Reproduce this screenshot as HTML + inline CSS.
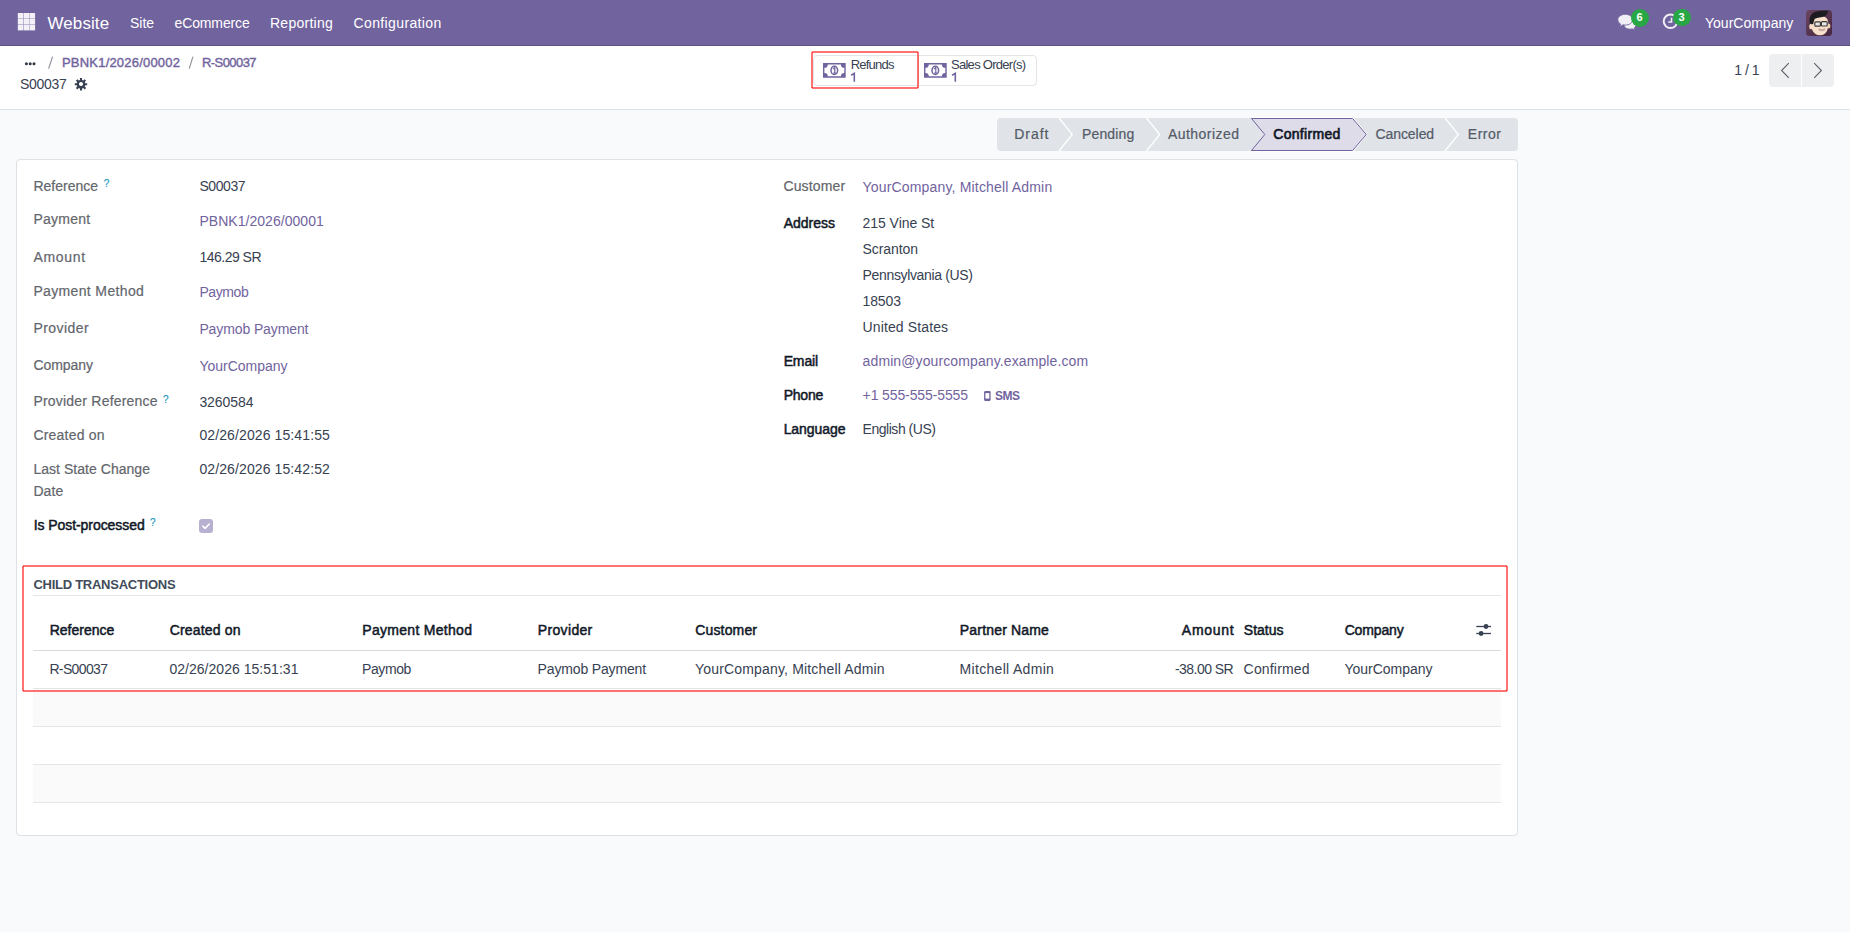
<!DOCTYPE html>
<html><head><meta charset="utf-8"><title>S00037</title>
<style>
html,body{margin:0;padding:0;}
body{width:1850px;height:932px;overflow:hidden;position:relative;background:#f9fafb;font-family:"Liberation Sans",sans-serif;}
.t{position:absolute;white-space:nowrap;line-height:20px;}
svg{position:absolute;overflow:visible;}
</style></head><body>
<div style="position:absolute;left:0px;top:0px;width:1850px;height:45px;background:#71639e;"></div>
<div style="position:absolute;left:0px;top:45px;width:1850px;height:1px;background:#5d5185;"></div>
<svg style="left:0;top:0" width="40" height="40" viewBox="0 0 40 40"><g fill="#f3f1f7"><rect x="17.8" y="13" width="5.6" height="5.6"/><rect x="17.8" y="18.9" width="5.6" height="5.6"/><rect x="17.8" y="24.8" width="5.6" height="5.6"/><rect x="23.7" y="13" width="5.6" height="5.6"/><rect x="23.7" y="18.9" width="5.6" height="5.6"/><rect x="23.7" y="24.8" width="5.6" height="5.6"/><rect x="29.5" y="13" width="5.6" height="5.6"/><rect x="29.5" y="18.9" width="5.6" height="5.6"/><rect x="29.5" y="24.8" width="5.6" height="5.6"/></g></svg>
<div class="t" style="left:47.50px;top:14px;font-size:17px;color:#ffffff;letter-spacing:0.083px;">Website</div>
<div class="t" style="left:130.00px;top:13px;font-size:14px;color:#ffffff;">Site</div>
<div class="t" style="left:174.50px;top:13px;font-size:14px;color:#ffffff;letter-spacing:-0.125px;">eCommerce</div>
<div class="t" style="left:270.00px;top:13px;font-size:14px;color:#ffffff;letter-spacing:0.250px;">Reporting</div>
<div class="t" style="left:353.50px;top:13px;font-size:14px;color:#ffffff;letter-spacing:0.375px;">Configuration</div>
<div class="t" style="left:1705.00px;top:13px;font-size:14px;color:#ffffff;">YourCompany</div>
<svg style="left:1610px;top:5px" width="40" height="30" viewBox="1610 5 40 30">
<path d="M1630 21 c3.3 0 6 1.8 6 4.1 c0 1.2 -.7 2.2 -1.8 3 l1.6 1.6 l-3.6 -.8 c-.7 .2 -1.4 .3 -2.2 .3 c-3.3 0 -6 -1.8 -6 -4.1 c0 -2.3 2.7 -4.1 6 -4.1z" fill="#f1eff6" stroke="#71639e" stroke-width=".9"/>
<path d="M1625.3 14.3 c4.1 0 7.4 2.4 7.4 5.4 c0 3 -3.3 5.4 -7.4 5.4 c-.8 0 -1.6 -.1 -2.3 -.3 l-3.3 2.1 l.9 -2.9 c-1.7 -1 -2.8 -2.5 -2.8 -4.3 c0 -3 3.3 -5.4 7.5 -5.4z" fill="#f1eff6" stroke="#71639e" stroke-width=".9"/>
</svg>
<div style="position:absolute;left:1630.8px;top:8.8px;width:18px;height:18px;background:#28a745;border-radius:50%;"></div>
<div class="t" style="left:1636.50px;top:7px;font-size:11px;color:#ffffff;font-weight:bold;">6</div>
<svg style="left:1662px;top:12px" width="18" height="18" viewBox="0 0 18 18">
<circle cx="8.5" cy="9.3" r="6.8" fill="none" stroke="#f1eff6" stroke-width="2"/>
<path d="M9.5 5.8 V10 H6.3" fill="none" stroke="#f1eff6" stroke-width="1.6"/>
</svg>
<div style="position:absolute;left:1673px;top:8.8px;width:17.5px;height:17.5px;background:#28a745;border-radius:50%;"></div>
<div class="t" style="left:1678.50px;top:7px;font-size:11px;color:#ffffff;font-weight:bold;">3</div>
<svg style="left:1806px;top:10px" width="26" height="26" viewBox="0 0 26 26">
<defs><linearGradient id="av" x1="0" y1="0" x2="1" y2="1"><stop offset="0" stop-color="#6a4560"/><stop offset="1" stop-color="#472740"/></linearGradient>
<clipPath id="avc"><rect x="0" y="0" width="26" height="26" rx="3.5"/></clipPath></defs>
<g clip-path="url(#avc)">
<rect x="0" y="0" width="26" height="26" fill="url(#av)"/>
<ellipse cx="5" cy="16.5" rx="1.8" ry="2.8" fill="#f7dcc5"/>
<ellipse cx="22.8" cy="16" rx="1.6" ry="2.6" fill="#efcfb5"/>
<path d="M5 14 C5 8 8.5 6 14 6 C19.5 6 22.5 8.5 22.3 14 C22.2 20 20 25.3 14 25.3 C8.2 25.3 5.3 20 5 14z" fill="#f8e0ca"/>
<path d="M3.6 12.5 C2.8 6 6.5 1.5 12 1.2 C16.5 .6 21 1 22.2 .8 C21.8 3.2 20.5 5.5 19 6.2 C15.5 7.5 11.5 7.2 8.8 8.8 C8 10.5 7.5 12 7.4 13.5 L6 14.5 C5 14 4 13.5 3.6 12.5z" fill="#1c1c20"/>
<rect x="8.8" y="11.9" width="5.6" height="4.3" rx=".9" fill="#e8e6e3" stroke="#3b3b3b" stroke-width="1.2"/>
<rect x="15.4" y="11.7" width="5.8" height="4.3" rx=".9" fill="#e8e6e3" stroke="#3b3b3b" stroke-width="1.2"/>
<path d="M12.8 19 Q15.8 20.2 18.8 18.8 L18.4 20.2 Q15.5 21.4 13.2 20.2z" fill="#e9d6d0" stroke="#9b6f6f" stroke-width=".5"/>
</g>
</svg>
<div style="position:absolute;left:0px;top:46px;width:1850px;height:63px;background:#ffffff;"></div>
<div style="position:absolute;left:0px;top:109px;width:1850px;height:1px;background:#dee1e5;"></div>
<svg style="left:20px;top:56px" width="20" height="14" viewBox="20 56 20 14"><g fill="#2f3742"><circle cx="26.4" cy="63.7" r="1.5"/><circle cx="30.2" cy="63.7" r="1.5"/><circle cx="34.0" cy="63.7" r="1.5"/></g></svg>
<svg style="left:40px;top:50px" width="20" height="24" viewBox="40 50 20 24"><path d="M48.6 68.6 L52.6 56.6" stroke="#8f929b" stroke-width="1.15"/></svg>
<div class="t" style="left:62.00px;top:53px;font-size:13px;color:#71639e;letter-spacing:0.200px;-webkit-text-stroke:0.4px #71639e;">PBNK1/2026/00002</div>
<svg style="left:180px;top:50px" width="20" height="24" viewBox="180 50 20 24"><path d="M189.2 68.6 L193.0 56.6" stroke="#8f929b" stroke-width="1.15"/></svg>
<div class="t" style="left:202.00px;top:53px;font-size:13px;color:#71639e;letter-spacing:-0.571px;-webkit-text-stroke:0.4px #71639e;">R-S00037</div>
<div class="t" style="left:20.00px;top:74px;font-size:14px;color:#374151;letter-spacing:-0.320px;">S00037</div>
<svg style="left:73.9px;top:76.8px" width="14" height="14" viewBox="-7 -7 14 14">
<g fill="#374151" transform="scale(0.95)">
<path d="M-1.1 -6.2 h2.2 v2 l1.3 .55 1.45 -1.45 1.55 1.55 -1.45 1.45 .55 1.3 h2 v2.2 h-2 l-.55 1.3 1.45 1.45 -1.55 1.55 -1.45 -1.45 -1.3 .55 v2 h-2.2 v-2 l-1.3 -.55 -1.45 1.45 -1.55 -1.55 1.45 -1.45 -.55 -1.3 h-2 v-2.2 h2 l.55 -1.3 -1.45 -1.45 1.55 -1.55 1.45 1.45 1.3 -.55z M0 -2.2 a2.2 2.2 0 1 0 .001 0z" fill-rule="evenodd"/>
</g></svg>
<div style="position:absolute;left:812.5px;top:54.5px;width:224.5px;height:31.5px;border:1px solid #e3e5e8;border-radius:4px;box-sizing:border-box;background:#fff;"></div>
<div style="position:absolute;left:918px;top:55px;width:1px;height:31px;background:#e3e5e8;"></div>
<svg style="left:823px;top:63px" width="23" height="15" viewBox="0 0 23 15">
<path d="M0 0 H22.7 V14.7 H0z M4.8 1.4 H17.9 A3.4 3.4 0 0 0 21.3 4.8 V9.9 A3.4 3.4 0 0 0 17.9 13.3 H4.8 A3.4 3.4 0 0 0 1.4 9.9 V4.8 A3.4 3.4 0 0 0 4.8 1.4z" fill="#71639e" fill-rule="evenodd"/>
<ellipse cx="11.3" cy="7.4" rx="3.3" ry="4.1" fill="#fff" stroke="#71639e" stroke-width="1.5"/>
<path d="M9.9 5.9 L11.8 4.7 V10.2 M10.2 10.1 H13.2" fill="none" stroke="#71639e" stroke-width="1.2"/>
</svg>
<div class="t" style="left:850.70px;top:55px;font-size:13px;color:#374151;letter-spacing:-0.783px;">Refunds</div>
<svg style="left:848px;top:70px" width="10" height="14" viewBox="848 70 10 14"><path d="M851.1 75.2 L854.3 73.3 V81.8" fill="none" stroke="#71639e" stroke-width="1.6"/></svg>
<svg style="left:924px;top:63px" width="23" height="15" viewBox="0 0 23 15">
<path d="M0 0 H22.7 V14.7 H0z M4.8 1.4 H17.9 A3.4 3.4 0 0 0 21.3 4.8 V9.9 A3.4 3.4 0 0 0 17.9 13.3 H4.8 A3.4 3.4 0 0 0 1.4 9.9 V4.8 A3.4 3.4 0 0 0 4.8 1.4z" fill="#71639e" fill-rule="evenodd"/>
<ellipse cx="11.3" cy="7.4" rx="3.3" ry="4.1" fill="#fff" stroke="#71639e" stroke-width="1.5"/>
<path d="M9.9 5.9 L11.8 4.7 V10.2 M10.2 10.1 H13.2" fill="none" stroke="#71639e" stroke-width="1.2"/>
</svg>
<div class="t" style="left:951.00px;top:55px;font-size:13px;color:#374151;letter-spacing:-0.723px;">Sales Order(s)</div>
<svg style="left:949px;top:70px" width="10" height="14" viewBox="949 70 10 14"><path d="M952.1 75.2 L955.3 73.3 V81.8" fill="none" stroke="#71639e" stroke-width="1.6"/></svg>
<div style="position:absolute;left:812px;top:51px;width:106px;height:2px;background:rgba(255,0,0,0.55);"></div>
<div style="position:absolute;left:812px;top:87px;width:106px;height:2px;background:rgba(255,0,0,0.55);"></div>
<div style="position:absolute;left:811px;top:52px;width:2px;height:36px;background:rgba(255,0,0,0.55);"></div>
<div style="position:absolute;left:917px;top:52px;width:2px;height:36px;background:rgba(255,0,0,0.55);"></div>
<div class="t" style="left:1734.30px;top:60px;font-size:14px;color:#374151;letter-spacing:-0.500px;">1 / 1</div>
<div style="position:absolute;left:1769px;top:54px;width:32px;height:33px;background:#eeeff1;border-radius:4px 0 0 4px;"></div>
<div style="position:absolute;left:1802px;top:54px;width:32px;height:33px;background:#eeeff1;border-radius:0 4px 4px 0;"></div>
<svg style="left:1769px;top:54px" width="65" height="33" viewBox="0 0 65 33">
<path d="M19.8 9.2 L12.6 16.5 L19.8 23.8" fill="none" stroke="#5a5f69" stroke-width="1.1"/>
<path d="M45.2 9.2 L52.4 16.5 L45.2 23.8" fill="none" stroke="#5a5f69" stroke-width="1.1"/>
</svg>
<svg style="left:997px;top:117px" width="522" height="36" viewBox="997 117 522 36">
<rect x="997" y="118" width="521" height="33" rx="4" fill="#e0e3e7"/>
<g fill="none" stroke="#ffffff" stroke-width="1.3">
<path d="M1059 118 L1072.3 134.5 L1059 151"/>
<path d="M1146.5 118 L1159.8 134.5 L1146.5 151"/>
<path d="M1445 118 L1458.3 134.5 L1445 151"/>
</g>
<path d="M1251 117 H1353 L1367.5 134.5 L1353 152 H1251 L1264.5 134.5z" fill="#ffffff"/>
<path d="M1251.5 118.5 H1352.6 L1366.3 134.5 L1352.6 150.5 H1251.5 L1264.8 134.5z" fill="#dfdce9" stroke="#71639e" stroke-width="1"/>
</svg>
<div class="t" style="left:1014.30px;top:124px;font-size:14px;color:#535b67;letter-spacing:0.925px;-webkit-text-stroke:0.2px #535b67;">Draft</div>
<div class="t" style="left:1082.00px;top:124px;font-size:14px;color:#535b67;letter-spacing:0.133px;-webkit-text-stroke:0.2px #535b67;">Pending</div>
<div class="t" style="left:1168.00px;top:124px;font-size:14px;color:#535b67;letter-spacing:0.444px;-webkit-text-stroke:0.2px #535b67;">Authorized</div>
<div class="t" style="left:1273.25px;top:124px;font-size:14px;color:#111827;letter-spacing:0.312px;-webkit-text-stroke:0.5px #111827;-webkit-text-stroke:0.65px #111827;">Confirmed</div>
<div class="t" style="left:1375.40px;top:124px;font-size:14px;color:#535b67;letter-spacing:-0.057px;-webkit-text-stroke:0.2px #535b67;">Canceled</div>
<div class="t" style="left:1467.80px;top:124px;font-size:14px;color:#535b67;letter-spacing:0.500px;-webkit-text-stroke:0.2px #535b67;">Error</div>
<div style="position:absolute;left:16px;top:159px;width:1502px;height:677px;background:#ffffff;border:1px solid #dee1e5;border-radius:4px;box-sizing:border-box;"></div>
<div class="t" style="left:33.40px;top:176px;font-size:14px;color:#63666c;-webkit-text-stroke:0.2px #63666c;">Reference</div>
<div class="t" style="left:33.40px;top:209px;font-size:14px;color:#63666c;letter-spacing:0.267px;-webkit-text-stroke:0.2px #63666c;">Payment</div>
<div class="t" style="left:33.40px;top:247px;font-size:14px;color:#63666c;letter-spacing:0.720px;-webkit-text-stroke:0.2px #63666c;">Amount</div>
<div class="t" style="left:33.40px;top:281px;font-size:14px;color:#63666c;letter-spacing:0.354px;-webkit-text-stroke:0.2px #63666c;">Payment Method</div>
<div class="t" style="left:33.40px;top:318px;font-size:14px;color:#63666c;letter-spacing:0.457px;-webkit-text-stroke:0.2px #63666c;">Provider</div>
<div class="t" style="left:33.40px;top:355px;font-size:14px;color:#63666c;letter-spacing:-0.067px;-webkit-text-stroke:0.2px #63666c;">Company</div>
<div class="t" style="left:33.40px;top:391px;font-size:14px;color:#63666c;letter-spacing:0.212px;-webkit-text-stroke:0.2px #63666c;">Provider Reference</div>
<div class="t" style="left:33.40px;top:425px;font-size:14px;color:#63666c;letter-spacing:0.222px;-webkit-text-stroke:0.2px #63666c;">Created on</div>
<div class="t" style="left:33.40px;top:459px;font-size:14px;color:#63666c;letter-spacing:0.037px;-webkit-text-stroke:0.2px #63666c;">Last State Change</div>
<div class="t" style="left:33.40px;top:481px;font-size:14px;color:#63666c;letter-spacing:0.067px;-webkit-text-stroke:0.2px #63666c;">Date</div>
<div class="t" style="left:103.80px;top:174px;font-size:10px;color:#2a9bc4;-webkit-text-stroke:0.2px #2a9bc4;">?</div>
<div class="t" style="left:163.00px;top:390px;font-size:10px;color:#2a9bc4;-webkit-text-stroke:0.2px #2a9bc4;">?</div>
<div class="t" style="left:33.65px;top:515px;font-size:14px;color:#111827;letter-spacing:-0.062px;-webkit-text-stroke:0.5px #111827;">Is Post-processed</div>
<div class="t" style="left:150.00px;top:513px;font-size:10px;color:#2a9bc4;-webkit-text-stroke:0.2px #2a9bc4;">?</div>
<div class="t" style="left:199.40px;top:176px;font-size:14px;color:#374151;letter-spacing:-0.400px;">S00037</div>
<div class="t" style="left:199.40px;top:211px;font-size:14px;color:#71639e;letter-spacing:0.040px;">PBNK1/2026/00001</div>
<div class="t" style="left:199.40px;top:247px;font-size:14px;color:#374151;letter-spacing:-0.500px;">146.29 SR</div>
<div class="t" style="left:199.40px;top:282px;font-size:14px;color:#71639e;letter-spacing:-0.400px;">Paymob</div>
<div class="t" style="left:199.40px;top:319px;font-size:14px;color:#71639e;letter-spacing:-0.108px;">Paymob Payment</div>
<div class="t" style="left:199.40px;top:356px;font-size:14px;color:#71639e;">YourCompany</div>
<div class="t" style="left:199.40px;top:392px;font-size:14px;color:#374151;letter-spacing:-0.067px;">3260584</div>
<div class="t" style="left:199.40px;top:425px;font-size:14px;color:#374151;letter-spacing:0.111px;">02/26/2026 15:41:55</div>
<div class="t" style="left:199.40px;top:459px;font-size:14px;color:#374151;letter-spacing:0.111px;">02/26/2026 15:42:52</div>
<svg style="left:199px;top:519px" width="14" height="14" viewBox="0 0 14 14">
<rect x="0" y="0" width="14" height="14" rx="3" fill="#b7b0d1"/>
<path d="M3.8 7.2 L6.1 9.4 L10.3 5" fill="none" stroke="#ffffff" stroke-width="1.6" stroke-linecap="round" stroke-linejoin="round"/>
</svg>
<div class="t" style="left:783.40px;top:176px;font-size:14px;color:#63666c;letter-spacing:0.143px;-webkit-text-stroke:0.2px #63666c;">Customer</div>
<div class="t" style="left:862.60px;top:177px;font-size:14px;color:#71639e;letter-spacing:0.169px;">YourCompany, Mitchell Admin</div>
<div class="t" style="left:783.65px;top:213px;font-size:14px;color:#111827;letter-spacing:0.017px;-webkit-text-stroke:0.5px #111827;">Address</div>
<div class="t" style="left:862.60px;top:213px;font-size:14px;color:#374151;letter-spacing:-0.060px;">215 Vine St</div>
<div class="t" style="left:862.60px;top:239px;font-size:14px;color:#374151;letter-spacing:-0.086px;">Scranton</div>
<div class="t" style="left:862.60px;top:265px;font-size:14px;color:#374151;letter-spacing:-0.350px;">Pennsylvania (US)</div>
<div class="t" style="left:862.60px;top:291px;font-size:14px;color:#374151;letter-spacing:-0.150px;">18503</div>
<div class="t" style="left:862.60px;top:317px;font-size:14px;color:#374151;letter-spacing:0.117px;">United States</div>
<div class="t" style="left:783.65px;top:351px;font-size:14px;color:#111827;letter-spacing:-0.125px;-webkit-text-stroke:0.5px #111827;">Email</div>
<div class="t" style="left:862.60px;top:351px;font-size:14px;color:#71639e;letter-spacing:0.107px;">admin@yourcompany.example.com</div>
<div class="t" style="left:783.65px;top:385px;font-size:14px;color:#111827;letter-spacing:-0.225px;-webkit-text-stroke:0.5px #111827;">Phone</div>
<div class="t" style="left:862.60px;top:385px;font-size:14px;color:#71639e;letter-spacing:-0.114px;">+1 555-555-5555</div>
<svg style="left:984px;top:391px" width="7" height="10" viewBox="0 0 7 10">
<rect x=".75" y=".75" width="5.2" height="8.5" rx=".8" fill="none" stroke="#71639e" stroke-width="1.3"/>
<rect x=".5" y=".5" width="5.7" height="1.6" fill="#71639e"/><rect x=".5" y="7.6" width="5.7" height="1.9" fill="#71639e"/>
</svg>
<div class="t" style="left:995.00px;top:386px;font-size:12px;color:#71639e;font-weight:bold;letter-spacing:-0.500px;">SMS</div>
<div class="t" style="left:783.65px;top:419px;font-size:14px;color:#111827;letter-spacing:-0.071px;-webkit-text-stroke:0.5px #111827;">Language</div>
<div class="t" style="left:862.60px;top:419px;font-size:14px;color:#374151;letter-spacing:-0.473px;">English (US)</div>
<div class="t" style="left:33.40px;top:575px;font-size:13px;color:#414b5a;font-weight:bold;letter-spacing:-0.259px;">CHILD TRANSACTIONS</div>
<div style="position:absolute;left:33px;top:595px;width:1468px;height:1px;background:#e4e6ea;"></div>
<div class="t" style="left:49.65px;top:620px;font-size:14px;color:#111827;letter-spacing:0.012px;-webkit-text-stroke:0.5px #111827;">Reference</div>
<div class="t" style="left:169.65px;top:620px;font-size:14px;color:#111827;letter-spacing:0.189px;-webkit-text-stroke:0.5px #111827;">Created on</div>
<div class="t" style="left:362.25px;top:620px;font-size:14px;color:#111827;letter-spacing:0.300px;-webkit-text-stroke:0.5px #111827;">Payment Method</div>
<div class="t" style="left:537.85px;top:620px;font-size:14px;color:#111827;letter-spacing:0.329px;-webkit-text-stroke:0.5px #111827;">Provider</div>
<div class="t" style="left:695.25px;top:620px;font-size:14px;color:#111827;letter-spacing:0.157px;-webkit-text-stroke:0.5px #111827;">Customer</div>
<div class="t" style="left:959.85px;top:620px;font-size:14px;color:#111827;letter-spacing:0.173px;-webkit-text-stroke:0.5px #111827;">Partner Name</div>
<div class="t" style="left:1181.85px;top:620px;font-size:14px;color:#111827;letter-spacing:0.700px;-webkit-text-stroke:0.5px #111827;">Amount</div>
<div class="t" style="left:1243.85px;top:620px;font-size:14px;color:#111827;letter-spacing:-0.020px;-webkit-text-stroke:0.5px #111827;">Status</div>
<div class="t" style="left:1344.65px;top:620px;font-size:14px;color:#111827;letter-spacing:-0.150px;-webkit-text-stroke:0.5px #111827;">Company</div>
<svg style="left:1476px;top:623px" width="16" height="14" viewBox="0 0 16 14">
<g stroke="#374151" stroke-width="1.3"><path d="M0.3 3.5 H15"/><path d="M0.3 10.5 H15"/></g>
<circle cx="10" cy="3.5" r="2.4" fill="#374151"/><circle cx="5.1" cy="10.5" r="2.4" fill="#374151"/>
</svg>
<div style="position:absolute;left:33px;top:650px;width:1468px;height:1px;background:#d8dadd;"></div>
<div class="t" style="left:49.40px;top:659px;font-size:14px;color:#374151;letter-spacing:-0.629px;">R-S00037</div>
<div class="t" style="left:169.40px;top:659px;font-size:14px;color:#374151;letter-spacing:0.033px;">02/26/2026 15:51:31</div>
<div class="t" style="left:362.00px;top:659px;font-size:14px;color:#374151;letter-spacing:-0.400px;">Paymob</div>
<div class="t" style="left:537.60px;top:659px;font-size:14px;color:#374151;letter-spacing:-0.154px;">Paymob Payment</div>
<div class="t" style="left:695.00px;top:659px;font-size:14px;color:#374151;letter-spacing:0.169px;">YourCompany, Mitchell Admin</div>
<div class="t" style="left:959.60px;top:659px;font-size:14px;color:#374151;letter-spacing:0.308px;">Mitchell Admin</div>
<div class="t" style="left:1175.00px;top:659px;font-size:14px;color:#374151;letter-spacing:-0.550px;">-38.00 SR</div>
<div class="t" style="left:1243.60px;top:659px;font-size:14px;color:#374151;letter-spacing:0.175px;">Confirmed</div>
<div class="t" style="left:1344.40px;top:659px;font-size:14px;color:#374151;">YourCompany</div>
<div style="position:absolute;left:33px;top:688px;width:1468px;height:1px;background:#e4e6ea;"></div>
<div style="position:absolute;left:33px;top:689px;width:1468px;height:37px;background:#fafafb;"></div>
<div style="position:absolute;left:33px;top:726px;width:1468px;height:1px;background:#e4e6ea;"></div>
<div style="position:absolute;left:33px;top:764px;width:1468px;height:1px;background:#e4e6ea;"></div>
<div style="position:absolute;left:33px;top:765px;width:1468px;height:37px;background:#fafafb;"></div>
<div style="position:absolute;left:33px;top:802px;width:1468px;height:1px;background:#e4e6ea;"></div>
<div style="position:absolute;left:23px;top:565px;width:1484px;height:2px;background:rgba(255,0,0,0.55);"></div>
<div style="position:absolute;left:23px;top:690px;width:1484px;height:2px;background:rgba(255,0,0,0.55);"></div>
<div style="position:absolute;left:22px;top:566px;width:2px;height:125px;background:rgba(255,0,0,0.55);"></div>
<div style="position:absolute;left:1506px;top:566px;width:2px;height:125px;background:rgba(255,0,0,0.55);"></div>
</body></html>
